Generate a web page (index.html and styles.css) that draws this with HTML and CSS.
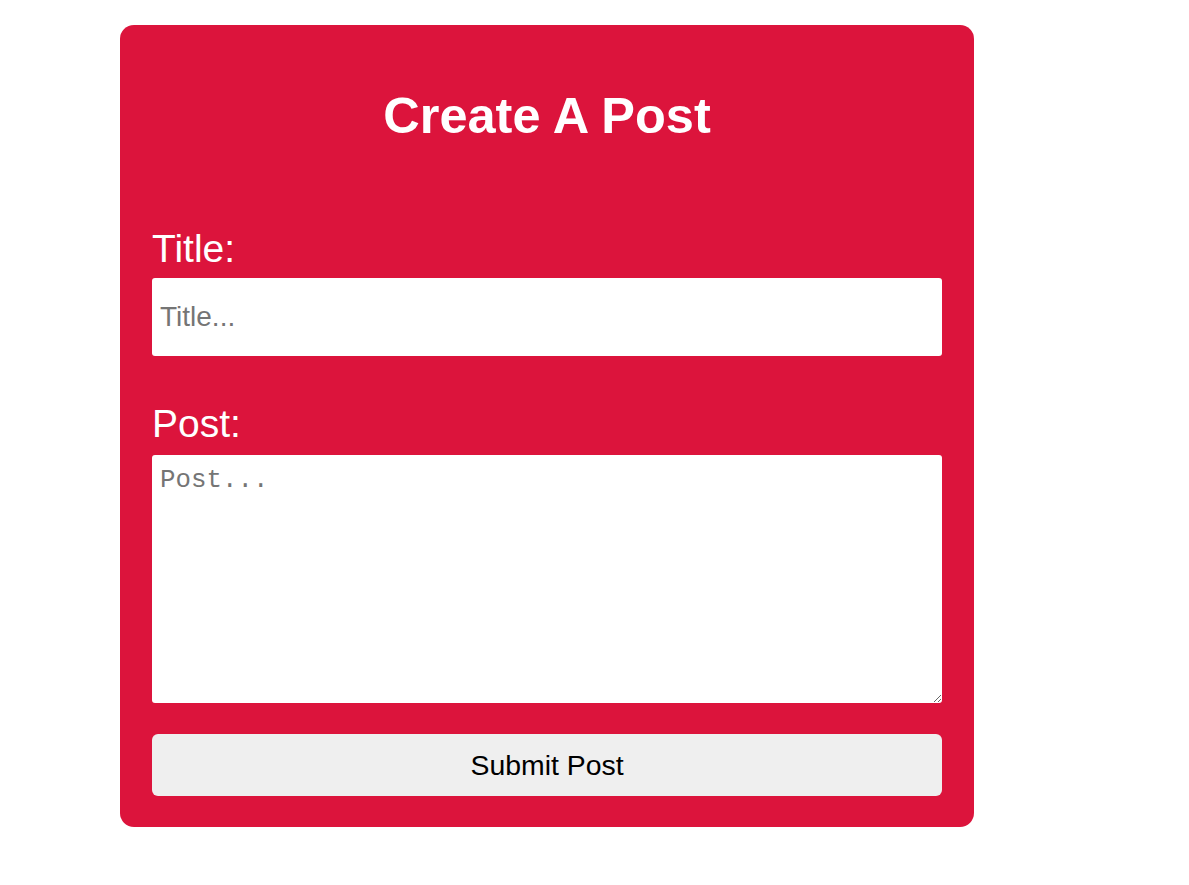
FILE: index.html
```html
<!DOCTYPE html>
<html lang="en">
<head>
<meta charset="utf-8">
<title>Create A Post</title>
<link rel="stylesheet" href="styles.css">
</head>
<body>
  <main class="page">
    <form class="card">
      <h1 class="card-title">Create A Post</h1>
      <label class="field-label label-title" for="title">Title:</label>
      <input class="text-input" id="title" type="text" placeholder="Title...">
      <label class="field-label label-post" for="post">Post:</label>
      <textarea class="text-area" id="post" placeholder="Post..."></textarea>
      <button class="submit-btn" type="button">Submit Post</button>
    </form>
  </main>
</body>
</html>
```

FILE: styles.css
```css
* { box-sizing: border-box; }

html, body {
  margin: 0;
  padding: 0;
  background: #ffffff;
  font-family: "Liberation Sans", Arial, sans-serif;
}

.page {
  padding: 25px 0 0 120px;
}

.card {
  width: 854px;
  height: 802px;
  background: #dc143c;
  border-radius: 14px;
  padding: 32px 32px 31px;
  display: flex;
  flex-direction: column;
}

.card-title {
  margin: 31px 0 0;
  font-size: 50.5px;
  line-height: 56px;
  font-weight: bold;
  color: #ffffff;
  text-align: center;
}

.field-label {
  display: block;
  color: #ffffff;
  font-size: 39px;
  line-height: 45px;
}

.label-title {
  margin-top: 82px;
}

.label-post {
  margin-top: 45px;
}

.text-input {
  margin-top: 7px;
  width: 100%;
  height: 78px;
  border: none;
  border-radius: 3px;
  background: #ffffff;
  padding: 0 8px;
  font-family: "Liberation Sans", Arial, sans-serif;
  font-size: 28px;
  color: #000;
  outline: none;
}

.text-input::placeholder {
  color: #757575;
}

.text-area {
  margin-top: 9px;
  width: 100%;
  height: 248px;
  border: none;
  border-radius: 3px;
  background: #ffffff;
  padding: 11px 8px 8px;
  font-family: "Liberation Mono", "DejaVu Sans Mono", monospace;
  font-size: 25.8px;
  line-height: 30px;
  color: #000;
  outline: none;
  resize: both;
}

.text-area::placeholder {
  color: #757575;
}

.submit-btn {
  margin-top: 31px;
  width: 100%;
  height: 62px;
  border: none;
  border-radius: 6px;
  background: #efefef;
  color: #000;
  font-family: "Liberation Sans", Arial, sans-serif;
  font-size: 28.4px;
  cursor: pointer;
}
```
